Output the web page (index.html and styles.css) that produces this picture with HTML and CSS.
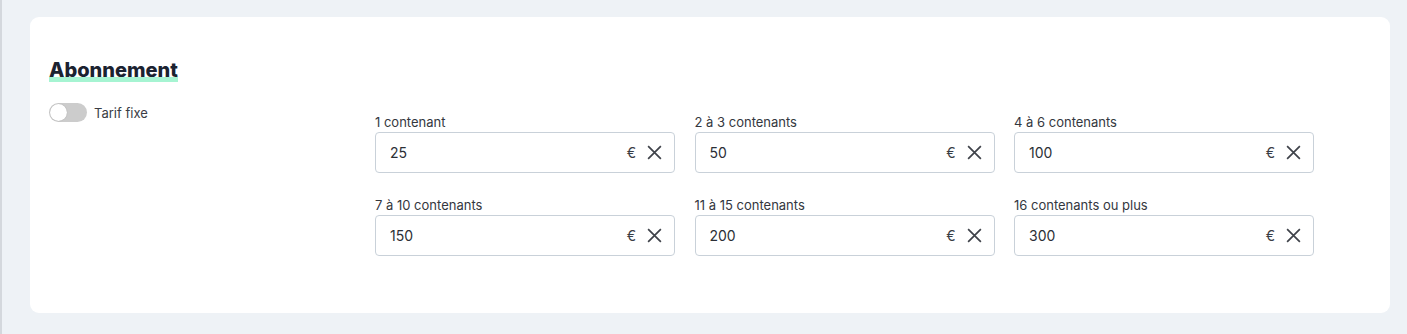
FILE: index.html
```html
<!DOCTYPE html>
<html lang="fr">

<head>
    <meta charset="UTF-8">
    <meta name="viewport" content="width=device-width, initial-scale=1.0">
    <title>Abonnement</title>
    <link rel="stylesheet" href="styles.css">
</head>

<body>
    <section class="card">
        <h2 class="title"><span>Abonnement</span></h2>

        <div class="content">
            <label class="switch">
                <span class="switch-track"><span class="switch-knob"></span></span>
                <span class="switch-text">Tarif fixe</span>
            </label>

            <div class="grid">
                <div class="field">
                    <label>1 contenant</label>
                    <div class="input">
                        <span class="value">25</span>
                        <span class="unit">€</span>
                        <svg class="clear" viewBox="0 0 16 16"><path d="M2 2L14 14M14 2L2 14" /></svg>
                    </div>
                </div>
                <div class="field">
                    <label>2 à 3 contenants</label>
                    <div class="input">
                        <span class="value">50</span>
                        <span class="unit">€</span>
                        <svg class="clear" viewBox="0 0 16 16"><path d="M2 2L14 14M14 2L2 14" /></svg>
                    </div>
                </div>
                <div class="field">
                    <label>4 à 6 contenants</label>
                    <div class="input">
                        <span class="value">100</span>
                        <span class="unit">€</span>
                        <svg class="clear" viewBox="0 0 16 16"><path d="M2 2L14 14M14 2L2 14" /></svg>
                    </div>
                </div>
                <div class="field">
                    <label>7 à 10 contenants</label>
                    <div class="input">
                        <span class="value">150</span>
                        <span class="unit">€</span>
                        <svg class="clear" viewBox="0 0 16 16"><path d="M2 2L14 14M14 2L2 14" /></svg>
                    </div>
                </div>
                <div class="field">
                    <label>11 à 15 contenants</label>
                    <div class="input">
                        <span class="value">200</span>
                        <span class="unit">€</span>
                        <svg class="clear" viewBox="0 0 16 16"><path d="M2 2L14 14M14 2L2 14" /></svg>
                    </div>
                </div>
                <div class="field">
                    <label>16 contenants ou plus</label>
                    <div class="input">
                        <span class="value">300</span>
                        <span class="unit">€</span>
                        <svg class="clear" viewBox="0 0 16 16"><path d="M2 2L14 14M14 2L2 14" /></svg>
                    </div>
                </div>
            </div>
        </div>
    </section>
</body>

</html>
```

FILE: styles.css
```css
html {
    background-color: #eef2f6;
}

body {
    margin: 0;
    padding: 17px 17px 22px 30px;
    font-family: Inter, "Noto Sans", sans-serif;
    color: #2c2f36;
    border-left: 2px solid #d4d8dd;
    min-height: 295px;
}

.card {
    background-color: #fff;
    border-radius: 9px;
    padding: 41px 19px 57px 19px;
    margin-left: -2px;
}

.title {
    margin: 0;
    font-size: 20px;
    font-weight: 800;
    line-height: 24px;
    color: #1b2230;
}

.title span {
    background: linear-gradient(transparent 79%, #a6f4d2 79%, #a6f4d2 100%);
}

.content {
    display: flex;
    margin-top: 21px;
}

.switch {
    display: flex;
    align-items: center;
    gap: 7px;
    width: 326px;
    height: 19px;
    align-self: flex-start;
}

.switch-track {
    width: 38px;
    height: 19px;
    border-radius: 10px;
    background-color: #cccccc;
    position: relative;
}

.switch-knob {
    position: absolute;
    top: 1px;
    left: 1px;
    width: 17px;
    height: 17px;
    border-radius: 50%;
    background-color: #fff;
    box-shadow: 0 0 1px rgba(0, 0, 0, 0.3);
}

.switch-text {
    font-size: 13px;
    color: #3a3d45;
}

.grid {
    display: grid;
    grid-template-columns: 300px 300px 300px;
    column-gap: 19.5px;
    row-gap: 23px;
    padding-top: 10px;
}

.field label {
    display: block;
    font-size: 13px;
    line-height: 18px;
    color: #34373e;
    margin-bottom: 1px;
}

.input {
    display: flex;
    align-items: center;
    height: 41px;
    box-sizing: border-box;
    border: 1px solid #c9d1d9;
    border-radius: 4px;
    padding: 0 11px 0 14px;
}

.value {
    flex: 1;
    font-size: 14px;
    color: #2c2f36;
}

.unit {
    font-size: 14px;
    color: #3a3d45;
    margin-right: 10px;
}

.clear {
    width: 17px;
    height: 17px;
    stroke: #3f434a;
    stroke-width: 1.6;
    fill: none;
}
```
